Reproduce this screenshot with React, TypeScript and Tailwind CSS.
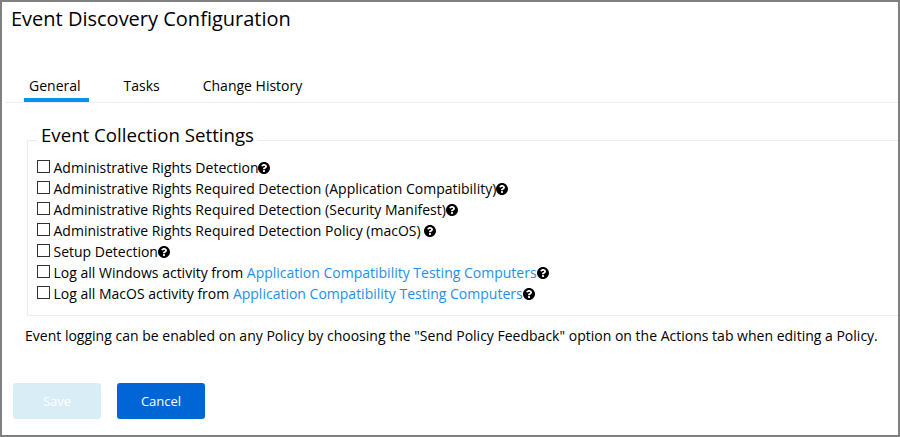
import { FaQuestionCircle } from 'react-icons/fa';

const rows: { text: string; link?: string; gap?: boolean }[] = [
  { text: 'Administrative Rights Detection' },
  { text: 'Administrative Rights Required Detection (Application Compatibility)' },
  { text: 'Administrative Rights Required Detection (Security Manifest)' },
  { text: 'Administrative Rights Required Detection Policy (macOS)', gap: true },
  { text: 'Setup Detection' },
  { text: 'Log all Windows activity from', link: 'Application Compatibility Testing Computers' },
  { text: 'Log all MacOS activity from', link: 'Application Compatibility Testing Computers' },
];

export default function App() {
  return (
    <div className="h-[437px] w-[900px] overflow-hidden border-2 border-[#808080] bg-white font-['Open_Sans','Noto_Sans',sans-serif] text-sm text-black">
      <h1 className="h-[68px] pl-[9px] pt-[3px] text-[20px] leading-7">Event Discovery Configuration</h1>
      <nav className="ml-[3px] flex h-[33px] items-start border-b border-[#e8eef3] pl-[19px]">
        <span className="h-[32px] w-[65px] border-b-4 border-[#0693eb] pl-[5px] pt-[6px] leading-5">General</span>
        <span className="ml-[34.5px] pt-[6px] leading-5">Tasks</span>
        <span className="ml-[43px] pt-[6px] leading-5">Change History</span>
      </nav>
      <fieldset className="ml-[25px] mt-5 h-[193px] border border-r-0 border-[#e9edf1] pl-[9px]">
        <legend className="px-[4px] pb-[10px] text-[18.67px] leading-6">Event Collection Settings</legend>
        {rows.map((r) => (
          <div key={r.text} className="flex h-[21px] items-center whitespace-pre leading-[21px]">
            <span className="mb-[3px] mr-[3.5px] h-[13px] w-[13px] border border-[#333333] bg-white" />
            <span>{r.text}</span>
            {r.link && <a className="text-[#1e90e8]"> {r.link}</a>}
            {r.gap && <span> </span>}
            <FaQuestionCircle viewBox="8 8 496 496" className="h-3 w-3" />
          </div>
        ))}
      </fieldset>
      <p className="ml-[23px] mt-[10px] whitespace-nowrap leading-5 tracking-[0.006px]">Event logging can be enabled on any Policy by choosing the "Send Policy Feedback" option on the Actions tab when editing a Policy.</p>
      <div className="ml-[11px] mt-[37px] flex gap-4 text-[13px] text-white">
        <button className="h-9 w-[88px] rounded-[3px] bg-[#d9edf7]">Save</button>
        <button className="h-9 w-[88px] rounded-[3px] bg-[#0066d6]">Cancel</button>
      </div>
    </div>
  );
}
